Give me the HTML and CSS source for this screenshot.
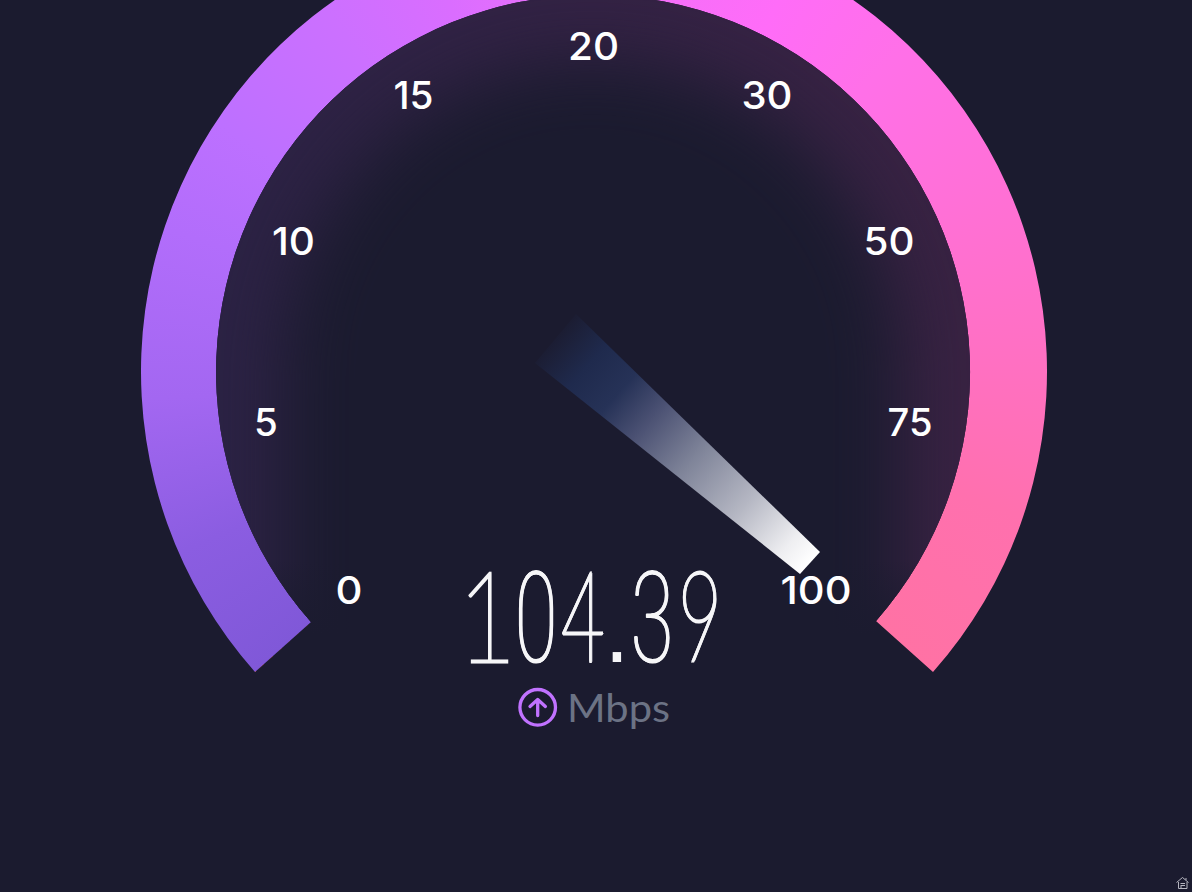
FILE: index.html
```
<!DOCTYPE html>
<html lang="en">
<head>
<meta charset="utf-8">
<title>Upload speed</title>
<link rel="stylesheet" href="styles.css">
</head>
<body>
<main class="gauge">
  <div class="ring"></div>
  <svg class="dial" viewBox="0 0 1192 892" width="1192" height="892">
    <defs>
      <clipPath id="face"><path d="M311 622A377 377 0 1 1 876 621L876 650H311Z"/></clipPath>
      <linearGradient id="tint" x1="216" x2="970" y1="0" y2="0" gradientUnits="userSpaceOnUse">
        <stop offset="0" stop-color="#2b2244"/><stop offset=".5" stop-color="#332244"/><stop offset="1" stop-color="#382242"/>
      </linearGradient>
      <linearGradient id="fade" x1="0" x2="0" y1="0" y2="1">
        <stop offset="0" stop-color="#1b1b2f" stop-opacity="0"/><stop offset="1" stop-color="#1b1b2f"/>
      </linearGradient>
      <linearGradient id="beam" x1="552" y1="333" x2="809" y2="563" gradientUnits="userSpaceOnUse">
        <stop offset="0" stop-color="#1b1b2f"/><stop offset=".14" stop-color="#1f2a4d"/><stop offset=".26" stop-color="#263257"/><stop offset=".38" stop-color="#4b5173"/><stop offset=".55" stop-color="#7f8499"/><stop offset=".75" stop-color="#b5b7c3"/><stop offset=".92" stop-color="#eeeef1"/><stop offset="1" stop-color="#fff"/>
      </linearGradient>
      <filter id="soft" filterUnits="userSpaceOnUse" x="100" y="-100" width="1000" height="1300" color-interpolation-filters="sRGB"><feGaussianBlur stdDeviation="34"/></filter>
    </defs>
    <g clip-path="url(#face)">
      <rect x="200" y="-10" width="790" height="670" fill="url(#tint)"/>
      <path d="M283 1100V372A309 311 0 0 1 901 372V1100Z" fill="#1b1b2f" filter="url(#soft)"/>
      <rect x="200" y="560" width="790" height="75" fill="url(#fade)"/>
      <rect x="200" y="635" width="790" height="20" fill="#1b1b2f"/>
    </g>
    <path d="M576 314L820 552L800 574L535 363Z" fill="url(#beam)"/>
    <g class="ticks">
      <text x="349" y="604" textLength="27" lengthAdjust="spacingAndGlyphs">0</text>
      <text x="266" y="436">5</text>
      <text x="293.5" y="255" textLength="43" lengthAdjust="spacingAndGlyphs">10</text>
      <text x="413.5" y="109" textLength="40" lengthAdjust="spacingAndGlyphs">15</text>
      <text x="593.5" y="60" textLength="51" lengthAdjust="spacingAndGlyphs">20</text>
      <text x="767" y="109" textLength="51" lengthAdjust="spacingAndGlyphs">30</text>
      <text x="889" y="255" textLength="51" lengthAdjust="spacingAndGlyphs">50</text>
      <text x="910" y="436" textLength="45" lengthAdjust="spacingAndGlyphs">75</text>
      <text x="816" y="604" textLength="71" lengthAdjust="spacingAndGlyphs">100</text>
    </g>
    <g class="upload"><circle cx="537.7" cy="707.3" r="17.8"/><path d="M537.7 715.500V700M530 706.500L537.700 699.500L545.400 706.500"/></g>
    <text class="unit" x="567" y="721.5" textLength="103" lengthAdjust="spacingAndGlyphs">Mbps</text>
    <path class="home" d="M1176.5 882.500L1182.500 877.500L1188.500 882.500M1178.500 882V888.500H1187V882M1180.500 883.500H1185M1180.500 885.500H1185M1186 878V880M1181 888V886"/>
  </svg>
  <div class="reading"><span class="one">1</span><span class="round">0</span><span class="four">4</span><span class="dot">.</span><span class="round">3</span><span class="nine">9</span></div>
</main>
</body>
</html>
```
FILE: styles.css
```
body { margin: 0; background: #1b1b2f; }
.gauge { position: relative; width: 1192px; height: 892px; overflow: hidden; background: #1b1b2f; }
.ring {
  position: absolute; inset: 0;
  background: conic-gradient(from 228.5deg at 594px 372px, #8058d8 0deg, #8b5de1 18deg, #a367f1 38deg, #b26dfb 60deg, #bd70ff 75deg, #cc70ff 95deg, #da6dff 110deg, #ee70fa 130deg, #ff6cf8 158deg, #ff70e8 175deg, #ff70d8 195deg, #ff70c2 220deg, #ff70ae 240deg, #ff72a4 264deg);
  clip-path: path("M255 672A453 453 0 1 1 933 672L876 621A377 377 0 1 0 311 622Z");
}
.dial { position: absolute; inset: 0; display: block; }
.ticks { font: 500 38.5px Inter, sans-serif; fill: #fff; text-anchor: middle; }
.reading {
  position: absolute; left: 462px; top: 550.5px;
  display: grid; grid-template-columns: 50px 48px 46px 22px 48px 48px; align-items: baseline;
  font: 200 126px/126px Lato, sans-serif; color: #f6f6f8;
  -webkit-text-stroke: 2.8px #f6f6f8; text-shadow: 1.8px 0 #f6f6f8, -1.8px 0 #f6f6f8;
}
.reading span { display: flex; justify-content: center; min-width: 0; transform: scaleX(.6); }
.reading .one { transform: scaleX(.8); text-shadow: .8px 0 #f6f6f8, -.8px 0 #f6f6f8; }
.reading .round { font-family: Roboto, sans-serif; font-weight: 100; -webkit-text-stroke: 1.2px #f6f6f8; transform: scaleX(.61); text-shadow: 1.2px 0 #f6f6f8, -1.2px 0 #f6f6f8; }
.reading .dot { font: 400 92px/126px "Liberation Sans", sans-serif; -webkit-text-stroke: 0; text-shadow: none; transform: scaleX(.95); }
.unit { font: 400 38px Lato, sans-serif; fill: #6c7385; }
.upload { fill: none; stroke: #c172ff; stroke-width: 3.3; stroke-linecap: round; stroke-linejoin: round; }
.home { fill: none; stroke: #b5b5bf; stroke-width: 1; }
```
